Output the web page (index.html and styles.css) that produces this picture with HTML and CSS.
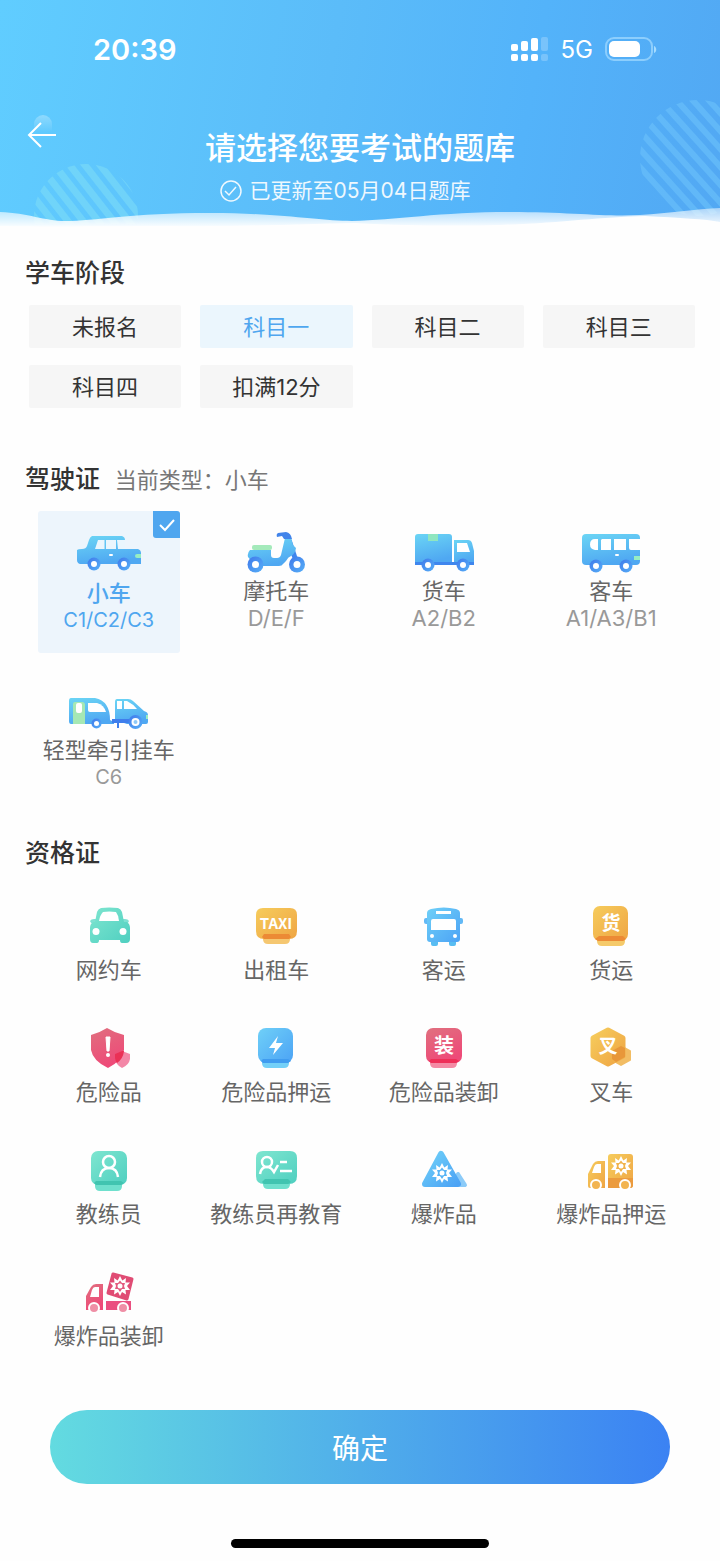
FILE: index.html
```
<!DOCTYPE html>
<html lang="zh-CN">
<head>
<meta charset="utf-8">
<meta name="viewport" content="width=device-width, initial-scale=1">
<title>请选择您要考试的题库</title>
<link rel="stylesheet" href="styles.css">
</head>
<body>

<!-- shared gradients and shapes -->
<svg class="defs" width="0" height="0" aria-hidden="true">
  <defs>
    <linearGradient id="blue" x1="0" y1="0" x2="0.3" y2="1">
      <stop offset="0" stop-color="#6bd5f5"/><stop offset="1" stop-color="#4fa8f2"/>
    </linearGradient>
    <linearGradient id="sky" x1="0" y1="0" x2="1" y2="1">
      <stop offset="0" stop-color="#6fd0f8"/><stop offset="1" stop-color="#4ca3f5"/>
    </linearGradient>
    <linearGradient id="wheel" x1="0" y1="0" x2="1" y2="1">
      <stop offset="0" stop-color="#3f78ea"/><stop offset="1" stop-color="#57b0f8"/>
    </linearGradient>
    <linearGradient id="green" x1="0" y1="0" x2="1" y2="1">
      <stop offset="0" stop-color="#7fe6d0"/><stop offset="1" stop-color="#4fcfc0"/>
    </linearGradient>
    <linearGradient id="gold" x1="0" y1="0" x2="1" y2="1">
      <stop offset="0" stop-color="#f6cc5c"/><stop offset="1" stop-color="#efa544"/>
    </linearGradient>
    <linearGradient id="red" x1="0" y1="0" x2="0.4" y2="1">
      <stop offset="0" stop-color="#e0707f"/><stop offset="1" stop-color="#ee4a78"/>
    </linearGradient>
    <linearGradient id="fade" x1="0" y1="0" x2="0" y2="1">
      <stop offset="0" stop-color="#fff" stop-opacity=".5"/><stop offset="1" stop-color="#fff"/>
    </linearGradient>
    <linearGradient id="drop" x1="0" y1="0" x2="0" y2="1">
      <stop offset="0" stop-color="#fff" stop-opacity=".3"/><stop offset="1" stop-color="#fff" stop-opacity="0"/>
    </linearGradient>
    <pattern id="stripes" width="12" height="12" patternUnits="userSpaceOnUse" patternTransform="rotate(-38)">
      <rect width="7" height="12" fill="#7cdcf8"/>
    </pattern>
    <pattern id="stripes2" width="12" height="12" patternUnits="userSpaceOnUse" patternTransform="rotate(-42)">
      <rect width="6" height="12" fill="#6cc2fb"/>
    </pattern>
    <g id="burst">
      <path d="M0-10 2.300-5.500 6-8 5.500-3.500 10-3.500 7 0 10 4 5.500 4 6 8.500 2 6 0 10-2 6-6 8.500-5.500 4-10 4-7 0-10-3.500-5.500-3.500-6-8-2.300-5.500Z" fill="#fff"/>
      <path d="M0-5.500 2-3 5-3 4 0 5 3 2 3 0 6-2 3-5 3-4 0-5-3-2-3Z" fill="currentColor"/>
      <circle r="2.500" fill="#fff"/>
    </g>
    <g id="tyre">
      <circle r="6.500" fill="url(#wheel)"/><circle r="3" fill="#fff"/>
    </g>
  </defs>
</svg>

<header class="top">
  <svg class="ring ring-left" width="104" height="60" viewBox="0 0 104 60" aria-hidden="true">
    <circle cx="52" cy="52" r="52" fill="url(#stripes)"/>
  </svg>
  <svg class="ring ring-right" width="80" height="116" viewBox="0 0 80 116" aria-hidden="true">
    <circle cx="58" cy="58" r="58" fill="url(#stripes2)"/>
  </svg>
  <svg class="wave" viewBox="0 0 720 22" preserveAspectRatio="none" aria-hidden="true">
    <path d="M0 6C28 7 45 15 65 15 95 15 130 7 210 7 280 7 320 15 352 15 395 14 440 6 510 6 570 6 605 11 640 9 670 7 695 3 720 2V22H0Z" fill="url(#fade)"/>
    <path d="M0 20C60 21 110 20 170 20 240 21 300 18 355 17 410 20 460 20 500 19 560 17 600 11 645 10 680 12 705 13 720 16V22H0Z" fill="#fefefe"/>
  </svg>

  <div class="status">
    <span class="clock">20:39</span>
    <svg class="signal" width="38" height="24" viewBox="0 0 38 24" fill="#fff" aria-hidden="true">
      <rect x="0" y="7" width="7" height="7" rx="2"/><rect x="0" y="17" width="7" height="7" rx="2"/>
      <rect x="10" y="4" width="7" height="10" rx="2"/><rect x="10" y="17" width="7" height="7" rx="2"/>
      <rect x="20" y="1" width="7" height="13" rx="2"/><rect x="20" y="17" width="7" height="7" rx="2"/>
      <g opacity=".22"><rect x="30" y="0" width="7" height="14" rx="2"/><rect x="30" y="17" width="7" height="7" rx="2"/></g>
    </svg>
    <span class="network">5G</span>
    <svg class="battery" width="52" height="25" viewBox="0 0 52 25" aria-hidden="true">
      <rect x="1" y="1" width="46" height="22" rx="8" fill="none" stroke="#a5dcff" stroke-opacity=".7" stroke-width="2"/>
      <rect x="4" y="4" width="31" height="16" rx="5" fill="#fff"/>
      <path d="M49 9C52 10 52 15 49 16Z" fill="#a5dcff"/>
    </svg>
  </div>

  <div class="nav">
    <button class="back" type="button" aria-label="返回">
      <svg width="30" height="34" viewBox="0 0 30 34" aria-hidden="true">
        <path d="M7 18V10a9 9 0 0 1 18 0V18Z" fill="url(#drop)"/>
        <path d="M14 9 2 21 14 33M2 21H29" fill="none" stroke="#fff" stroke-width="2"/>
      </svg>
    </button>
    <div class="titles">
      <h1>请选择您要考试的题库</h1>
      <p>
        <svg width="22" height="22" viewBox="0 0 22 22" fill="none" stroke="#fff" stroke-width="1.500" aria-hidden="true">
          <circle cx="11" cy="11" r="10"/><path d="M5 11 9 15 16 7"/>
        </svg>
        已更新至05月04日题库
      </p>
    </div>
  </div>
</header>

<main>
  <section>
    <h2>学车阶段</h2>
    <div class="stages">
      <button type="button">未报名</button>
      <button type="button" class="active" aria-pressed="true">科目一</button>
      <button type="button">科目二</button>
      <button type="button">科目三</button>
      <button type="button">科目四</button>
      <button type="button">扣满12分</button>
    </div>
  </section>

  <section class="licence">
    <h2>驾驶证 <small>当前类型：小车</small></h2>
    <div class="cards">
      <button type="button" class="card active" aria-pressed="true">
        <span class="tick"><svg width="27" height="27" viewBox="0 0 27 27" aria-hidden="true"><path d="M7 14 12 19 21 9" fill="none" stroke="#fff" stroke-width="2"/></svg></span>
        <svg width="84" height="44" viewBox="0 0 84 44" aria-hidden="true">
          <path d="M25 4H55Q58 5 58 8V17H71Q74 18 74 21V32H13Q10 31 10 28V18Q11 17 15 17 19 17 20 14L22 8Q23 5 25 4Z" fill="url(#blue)"/>
          <path d="M31 8H38V17H28ZM39 8H49V17H39ZM50 8H58V17H51Z" fill="#eaf6fd"/>
          <path d="M38 8V17" stroke="#66c7f3" stroke-width="1"/>
          <rect x="42" y="22" width="4" height="2" rx="1" fill="#fff"/>
          <path d="M74 22H70a2 2 0 0 0 0 4H74Z" fill="#97edc2"/>
          <use href="#tyre" x="27" y="32"/><use href="#tyre" x="57" y="32"/>
        </svg>
        <b>小车</b><i class="small">C1/C2/C3</i>
      </button>
      <button type="button" class="card">
        <svg width="84" height="44" viewBox="0 0 84 44" aria-hidden="true">
          <path d="M55 10 63 34" stroke="#3f86ee" stroke-width="5"/>
          <path d="M16 20H37V25Q37 28 40 28H43Q46 28 47 25L51 8H57L59 15 62 18Q61 24 57 26 54 27 52 31L49 34Q48 36 45 36H22L14 27Q13 23 16 20Z" fill="url(#blue)"/>
          <rect x="18" y="15" width="20" height="5" rx="2" fill="#a4eabb"/>
          <path d="M44 3 52 2Q57 3 58 9L50 9 48 6 43 7Q42 4 44 3Z" fill="#4284ea"/>
          <circle cx="21.500" cy="34.500" r="8" fill="url(#wheel)"/><circle cx="21.500" cy="34.500" r="3.500" fill="#fff"/>
          <circle cx="63" cy="34.500" r="8" fill="url(#wheel)"/><circle cx="63" cy="34.500" r="3.500" fill="#fff"/>
        </svg>
        <b>摩托车</b><i>D/E/F</i>
      </button>
      <button type="button" class="card">
        <svg width="84" height="44" viewBox="0 0 84 44" aria-hidden="true">
          <path d="M16 4H47Q50 4 50 7V33H13V7Q13 4 16 4Z" fill="url(#blue)"/>
          <path d="M26 4H36V11H26Z" fill="#8fe6c0"/>
          <path d="M52 10H66Q69 10 70 13L72 21V34H52Z" fill="url(#blue)"/>
          <path d="M55 13H65L68 22H55Z" fill="#fff"/>
          <path d="M13 32H72V35H13Z" fill="#3f86ee"/>
          <use href="#tyre" x="26" y="35"/><use href="#tyre" x="61" y="35"/>
        </svg>
        <b>货车</b><i>A2/B2</i>
      </button>
      <button type="button" class="card">
        <svg width="84" height="44" viewBox="0 0 84 44" aria-hidden="true">
          <path d="M17 4H67Q71 4 71 8V31Q71 35 67 35H17Q13 35 13 31V8Q13 4 17 4Z" fill="url(#blue)"/>
          <path d="M26 9H29V20H26Q21 19 21 14.500 21 9 26 9ZM33 9H42V20H32V10ZM45 9H57V20H45ZM60 9H71V20H62Q60 20 60 18Z" fill="#fff"/>
          <rect x="46" y="24" width="4" height="2" rx="1" fill="#fff"/>
          <path d="M71 26H65V30H71Z" fill="#97edc2"/>
          <use href="#tyre" x="27" y="36"/><use href="#tyre" x="57" y="36"/>
        </svg>
        <b>客车</b><i>A1/A3/B1</i>
      </button>
      <button type="button" class="card">
        <svg width="84" height="44" viewBox="0 0 84 44" aria-hidden="true">
          <path d="M4 9H28Q43 12 43 31L47 33V35H4Q2 35 2 32V12Q2 9 4 9Z" fill="url(#blue)"/>
          <path d="M6 15Q6 13 8 13H15Q18 13 18 16V35H6Z" fill="#a5e8b4"/>
          <rect x="9" y="14" width="6" height="10" rx="2" fill="#fff"/>
          <path d="M21 14H30Q37 16 39 23H23Q21 23 21 21Z" fill="#fff"/>
          <path d="M50 10H61Q64 10 66 12L77 22Q81 23 81 26V33Q81 35 79 35H60L48 31V13Q48 10 50 10Z" fill="url(#blue)"/>
          <path d="M50 12H55V20H50ZM57 12H60Q66 15 70 20H57Z" fill="#fff"/>
          <path d="M45 30H63V34H52V39H50V34H45Z" fill="#3f7eec"/>
          <circle cx="29.500" cy="34.500" r="5" fill="url(#wheel)"/><circle cx="29.500" cy="34.500" r="2.500" fill="#fff"/>
          <circle cx="68.500" cy="33" r="7" fill="url(#wheel)"/><circle cx="68.500" cy="33" r="4" fill="#fff"/><circle cx="68.500" cy="33" r="2" fill="#8ec9f8"/>
          <path d="M81 26H79V30H81Z" fill="#97edc2"/>
        </svg>
        <b>轻型牵引挂车</b><i class="small">C6</i>
      </button>
    </div>
  </section>

  <section class="certs">
    <h2>资格证</h2>
    <div class="items">
      <button type="button">
        <svg width="50" height="50" viewBox="0 0 50 50" aria-hidden="true">
          <path d="M6 20Q7 18 10 18H41Q44 18 45 20 44 23 41 23H10Q7 23 6 20Z" fill="#7fe0d2"/>
          <path d="M17 7Q25 6 34 7 37 8 38 11L40 21H43Q46 23 46 27V38Q46 42 42 42H38Q36 42 36 39H15Q15 42 13 42H9Q6 42 6 38V27Q6 23 9 21H11L13 11Q14 8 17 7Z" fill="url(#green)"/>
          <path d="M19 11Q25 10 32 11 35 15 35 20H15Q16 14 19 11Z" fill="#fff"/>
          <circle cx="12" cy="30.500" r="3.500" fill="#fff"/><circle cx="39" cy="30.500" r="3.500" fill="#fff"/>
        </svg>
        <span>网约车</span>
      </button>
      <button type="button">
        <svg width="50" height="50" viewBox="0 0 50 50" aria-hidden="true">
          <path d="M5 14Q5 7 12 7H39Q46 7 46 14V30Q46 38 38 38H13Q5 38 5 30Z" fill="url(#gold)"/>
          <path d="M12 34H39V38Q39 43 34 43H17Q12 43 12 38Z" fill="#f3b94e" opacity=".8"/>
          <path d="M13 33H38L40 36 38 38H13L11 36Z" fill="#ec8a35"/>
          <text class="glyph" x="25" y="28" font-size="15">TAXI</text>
        </svg>
        <span>出租车</span>
      </button>
      <button type="button">
        <svg width="50" height="50" viewBox="0 0 50 50" aria-hidden="true">
          <path d="M12 38H19V43Q19 45 17 45H14Q12 45 12 43ZM30 38H37V43Q37 45 35 45H32Q30 45 30 43Z" fill="#58bdf2"/>
          <rect x="5" y="17" width="39" height="6" rx="2" fill="#62b9f6"/>
          <path d="M8 12Q8 9 12 8 25 5 37 8 41 9 41 12V38Q41 41 38 41H11Q8 41 8 38Z" fill="url(#sky)"/>
          <path d="M17 10H32V13H17ZM14 18H35Q37 18 37 20V29H12V20Q12 18 14 18Z" fill="#fff"/>
          <circle cx="13" cy="35" r="2" fill="#fff"/><circle cx="36" cy="35" r="2" fill="#fff"/>
        </svg>
        <span>客运</span>
      </button>
      <button type="button">
        <svg width="50" height="50" viewBox="0 0 50 50" aria-hidden="true">
          <path d="M11 35H39V40Q39 45 34 45H16Q11 45 11 40Z" fill="#f5ca6a"/>
          <rect x="7" y="5" width="35" height="35" rx="7" fill="url(#gold)"/>
          <path d="M13 35H37L40 38 37 40H12L9 38Z" fill="#ec8a35"/>
          <text class="glyph" x="25" y="29" font-size="19">货</text>
        </svg>
        <span>货运</span>
      </button>
      <button type="button">
        <svg width="50" height="50" viewBox="0 0 50 50" aria-hidden="true">
          <path d="M23 5Q31 10 40 12V27Q38 38 24 45 9 38 7 27V12Q15 10 23 5Z" fill="url(#red)"/>
          <path d="M38 28 46 31V36Q45 42 38 45 32 42 31 36V31Z" fill="#ef5f8a" opacity=".75"/>
          <path d="M31 31 38 28 40 28Q39 36 33 40 31 38 31 35Z" fill="#ea3156"/>
          <path d="M22 14H26L25 28H23Z" fill="#fff" stroke="#fff" stroke-linejoin="round"/><circle cx="24" cy="32" r="2" fill="#fff"/>
        </svg>
        <span>危险品</span>
      </button>
      <button type="button">
        <svg width="50" height="50" viewBox="0 0 50 50" aria-hidden="true">
          <path d="M11 36H38V40Q38 45 33 45H16Q11 45 11 40Z" fill="#73d0f8"/>
          <rect x="7" y="5" width="35" height="35" rx="8" fill="url(#sky)"/>
          <path d="M12 36H37L40 38 37 40H12L10 38Z" fill="#3f9cf0"/>
          <path d="M27 13 18 25H24L22 32 32 20H25Z" fill="#fff"/>
        </svg>
        <span>危险品押运</span>
      </button>
      <button type="button">
        <svg width="50" height="50" viewBox="0 0 50 50" aria-hidden="true">
          <path d="M11 36H38V40Q38 45 33 45H16Q11 45 11 40Z" fill="#f48aa4"/>
          <rect x="7" y="5" width="36" height="35" rx="7" fill="url(#red)"/>
          <path d="M12 36H37L40 38 37 40H12L10 38Z" fill="#ee2f58"/>
          <text class="glyph" x="25" y="30" font-size="20">装</text>
        </svg>
        <span>危险品装卸</span>
      </button>
      <button type="button">
        <svg width="50" height="50" viewBox="0 0 50 50" aria-hidden="true">
          <path d="M22 7 37 15V33L22 41 7 33V15Z" fill="url(#gold)" stroke="url(#gold)" stroke-width="5" stroke-linejoin="round"/>
          <path d="M35 23 44 28V37L35 42 26 37V28Z" fill="#f0b24a" stroke="#f0b24a" stroke-width="2" stroke-linejoin="round" opacity=".85"/>
          <path d="M26 28 35 23 39 25V34L30 39 26 36Z" fill="#e8973a"/>
          <text class="glyph" x="22" y="30" font-size="19">叉</text>
        </svg>
        <span>叉车</span>
      </button>
      <button type="button">
        <svg width="50" height="50" viewBox="0 0 50 50" aria-hidden="true">
          <path d="M11 36H38V41Q38 46 33 46H16Q11 46 11 41Z" fill="#6fe0cd"/>
          <rect x="7" y="6" width="36" height="34" rx="7" fill="url(#green)"/>
          <path d="M12 36H37L40 38 37 40H12L10 38Z" fill="#41c4b0"/>
          <g fill="none" stroke="#fff" stroke-width="2.500"><circle cx="25" cy="17" r="6"/><path d="M16 32Q17 23 25 23 33 23 34 32"/></g>
        </svg>
        <span>教练员</span>
      </button>
      <button type="button">
        <svg width="50" height="50" viewBox="0 0 50 50" aria-hidden="true">
          <path d="M12 34H39V39Q39 44 34 44H17Q12 44 12 39Z" fill="#6fe0cd"/>
          <path d="M5 13Q5 6 12 6H39Q46 6 46 13V31Q46 39 38 39H13Q5 39 5 31Z" fill="url(#green)"/>
          <path d="M14 34H37L40 37 37 39H13L11 37Z" fill="#41c4b0"/>
          <g fill="none" stroke="#fff" stroke-width="2.500"><circle cx="16" cy="17" r="5"/><path d="M9 29Q10 22 16 22 20 22 23 27L27 20M29 17H36M29 26H41"/></g>
        </svg>
        <span>教练员再教育</span>
      </button>
      <button type="button">
        <svg width="50" height="50" viewBox="0 0 50 50" aria-hidden="true">
          <path d="M39 29 46 40H36Z" fill="#8ccbf8" stroke="#8ccbf8" stroke-width="4" stroke-linejoin="round"/>
          <path d="M22 9 39 39H6Z" fill="url(#sky)" stroke="url(#sky)" stroke-width="6" stroke-linejoin="round"/>
          <g color="#58b4f5"><use href="#burst" x="23" y="28"/></g>
        </svg>
        <span>爆炸品</span>
      </button>
      <button type="button">
        <svg width="50" height="50" viewBox="0 0 50 50" aria-hidden="true">
          <path d="M12 16H19V43H4Q2 43 2 41V29L7 19Q9 16 12 16Z" fill="url(#gold)"/>
          <path d="M11 19H15V28H6L8 22Q9 19 11 19Z" fill="#fff"/>
          <rect x="22" y="9" width="25" height="34" rx="3" fill="url(#gold)"/>
          <path d="M22 33H47V40Q47 43 44 43H22Z" fill="#eb9b3e"/>
          <g color="#f0b24a"><use href="#burst" x="35" y="21"/></g>
          <g fill="#f2b450" stroke="#fff" stroke-width="2"><circle cx="10" cy="40" r="5"/><circle cx="39" cy="40" r="5"/></g>
        </svg>
        <span>爆炸品押运</span>
      </button>
      <button type="button">
        <svg width="50" height="50" viewBox="0 0 50 50" aria-hidden="true">
          <path d="M12 17H19V43H2V29L7 20Q9 17 12 17Z" fill="url(#red)"/>
          <path d="M11 20H15V30H6L8 23Q9 20 11 20Z" fill="#fff"/>
          <path d="M22 34H47V43H22Z" fill="#ea4f80"/>
          <path d="M29 7 48 12 43 32 24 26Z" fill="#e04c74" stroke="#e04c74" stroke-width="3" stroke-linejoin="round"/>
          <g color="#e35a7e"><use href="#burst" x="36" y="19"/></g>
          <g fill="#ef8fa6" stroke="#fff" stroke-width="2"><circle cx="10" cy="41" r="5"/><circle cx="39" cy="41" r="5"/></g>
        </svg>
        <span>爆炸品装卸</span>
      </button>
    </div>
  </section>

  <button class="confirm" type="button">确定</button>
</main>

<div class="home-bar"></div>

</body>
</html>
```
FILE: styles.css
```
* {
  box-sizing: border-box;
}

body {
  margin: 0;
  background: #fefefe;
  color: #333;
  font-family: Inter, "Noto Sans CJK SC", sans-serif;
}

button {
  margin: 0;
  padding: 0;
  border: 0;
  background: none;
  color: inherit;
  font: inherit;
}

h1, h2, p {
  margin: 0;
}

svg {
  display: block;
  flex: none;
}

.defs {
  position: absolute;
}

/* header */
.top {
  position: relative;
  min-height: 228px;
  padding-top: 34px;
  overflow: hidden;
  color: #fff;
  background: linear-gradient(100deg, #60cdff 0%, #5bbcf9 45%, #53b3fa 72%, #52a8f3 100%);
}

.ring {
  position: absolute;
}
.ring-left {
  left: 34px;
  bottom: 4px;
  opacity: .6;
}
.ring-right {
  right: 0;
  bottom: 12px;
  opacity: .6;
}
.wave {
  position: absolute;
  left: 0;
  bottom: 0;
  width: 100%;
  height: 22px;
}

.status {
  display: flex;
  align-items: center;
  height: 30px;
  padding: 0 63px 0 93px;
}
.clock {
  flex: 1;
  font-size: 29px;
  font-weight: 600;
}
.network {
  margin: 0 12px;
  font-size: 24px;
}

.nav {
  position: relative;
  display: grid;
  grid-template-columns: 1fr auto 1fr;
  margin-top: 50px;
  padding: 0 27px;
}
.back {
  justify-self: start;
  align-self: start;
}
.titles {
  padding-top: 14px;
  text-align: center;
}
h1 {
  font-size: 31px;
  font-weight: 500;
  line-height: 40px;
}
.titles p {
  display: flex;
  justify-content: center;
  align-items: center;
  gap: 8px;
  margin: 10px 30px 0 0;
  font-size: 21px;
  line-height: 26px;
  opacity: .9;
}

/* sections */
section {
  padding: 28px 25px 0;
}
h2 {
  height: 34px;
  font-size: 25px;
  font-weight: 500;
  line-height: 34px;
}
h2 small {
  margin-left: 8px;
  color: #777;
  font-size: 22px;
  font-weight: 400;
}

.stages {
  display: grid;
  grid-template-columns: repeat(4, 1fr);
  gap: 17px 19px;
  margin: 15px 0 0 4px;
}
.stages button {
  height: 43px;
  padding-bottom: 4px;
  border-radius: 2px;
  background: #f6f6f6;
  font-size: 22px;
}
.stages .active {
  background: #ebf6fd;
  color: #4fa6ef;
}

/* driving licence */
.licence {
  padding-top: 54px;
}
.cards {
  display: grid;
  grid-template-columns: repeat(4, 1fr);
  justify-items: center;
  gap: 17px 0;
  margin-top: 15px;
}
.card {
  position: relative;
  display: flex;
  flex-direction: column;
  align-items: center;
  width: 142px;
  height: 142px;
  padding-top: 19px;
  border-radius: 3px;
}
.card b {
  margin-top: 3px;
  color: #666;
  font-size: 22px;
  font-weight: 400;
  line-height: 28px;
}
.card i {
  color: #999;
  font-size: 22px;
  font-style: normal;
  line-height: 27px;
}
.card .small {
  font-size: 20px;
}
.card.active {
  padding-top: 21px;
  background: #edf5fc;
}
.card.active b, .card.active i {
  color: #4fa6ef;
}
.card.active b {
  font-weight: 500;
}
.tick {
  position: absolute;
  top: 0;
  right: 0;
  border-radius: 0 3px 0 3px;
  background: #4fa6ef;
}

/* qualification certificates */
.certs {
  padding-top: 24px;
}
.items {
  display: grid;
  grid-template-columns: repeat(4, 1fr);
  grid-auto-rows: 122px;
  margin-top: 31px;
}
.items button {
  display: flex;
  flex-direction: column;
  align-items: center;
  color: #666;
  font-size: 22px;
  line-height: 32px;
  white-space: nowrap;
}
.items span {
  margin-top: 3px;
}
.glyph {
  fill: #fff;
  font-family: "Noto Sans CJK SC", sans-serif;
  font-weight: 700;
  text-anchor: middle;
}

.confirm {
  display: block;
  width: calc(100% - 100px);
  height: 74px;
  margin: 21px auto 0;
  border-radius: 37px;
  background: linear-gradient(90deg, #63dbe0, #50aeea 50%, #3b82f3);
  color: #fff;
  font-size: 28px;
}

.home-bar {
  width: 258px;
  height: 9px;
  margin: 55px auto 13px;
  border-radius: 5px;
  background: #000;
}
```
